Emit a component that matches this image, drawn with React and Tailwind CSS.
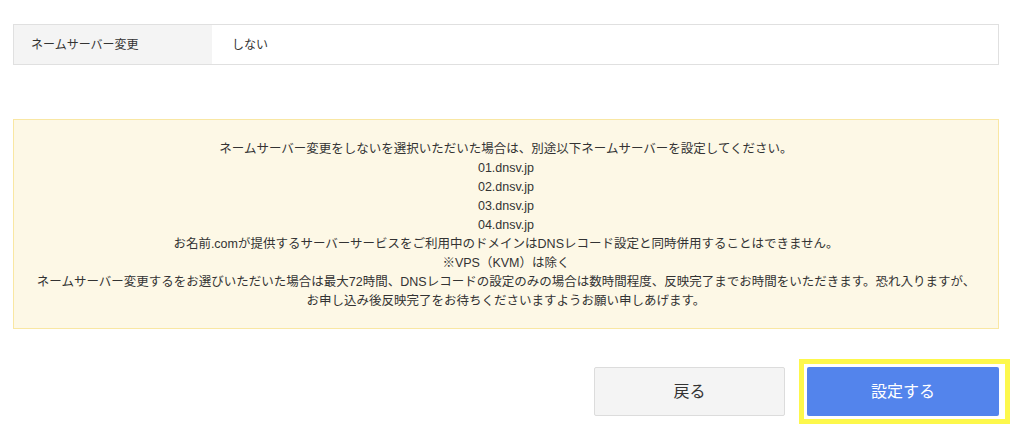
import React from 'react';

const lines = [
  'ネームサーバー変更をしないを選択いただいた場合は、別途以下ネームサーバーを設定してください。',
  '01.dnsv.jp',
  '02.dnsv.jp',
  '03.dnsv.jp',
  '04.dnsv.jp',
  'お名前.comが提供するサーバーサービスをご利用中のドメインはDNSレコード設定と同時併用することはできません。',
  '※VPS（KVM）は除く',
  'ネームサーバー変更するをお選びいただいた場合は最大72時間、DNSレコードの設定のみの場合は数時間程度、反映完了までお時間をいただきます。恐れ入りますが、',
  'お申し込み後反映完了をお待ちくださいますようお願い申しあげます。',
];

export default function App() {
  return (
    <div className="min-h-[431px] bg-white text-[#333] font-['Liberation_Sans','Noto_Sans_CJK_JP',sans-serif]">
      <div className="ml-[13px] w-[986px] pt-[24px]">
        {/* Setting row */}
        <div className="flex h-[41px] border border-[#e0e0e0]">
          <div className="w-[198px] bg-[#f4f4f4] flex items-center pl-[17px] text-[12px]">
            ネームサーバー変更
          </div>
          <div className="flex-1 flex items-center pl-[20px] text-[12px]">しない</div>
        </div>

        {/* Notice */}
        <div className="mt-[54px] h-[210px] border border-[#f9e7a3] bg-[#fdf8e6] pt-[20px] text-center text-[12.5px] leading-[19px]">
          {lines.map((l, i) => (
            <p key={i}>{l}</p>
          ))}
        </div>

        {/* Buttons */}
        <div className="mt-[30px] flex justify-end items-center gap-[14px] mr-[-11px]">
          <button className="w-[191px] h-[49px] bg-[#f4f4f4] border border-[#dcdcdc] rounded-[2px] text-[16px] text-[#333]">
            戻る
          </button>
          <div className="border-[5px] border-[#fdf84c] pl-[3px] pr-[6px] py-[3px]">
            <button className="block w-[192px] h-[49px] bg-[#5384ec] rounded-[2px] text-[16px] text-white">
              設定する
            </button>
          </div>
        </div>
      </div>
    </div>
  );
}
